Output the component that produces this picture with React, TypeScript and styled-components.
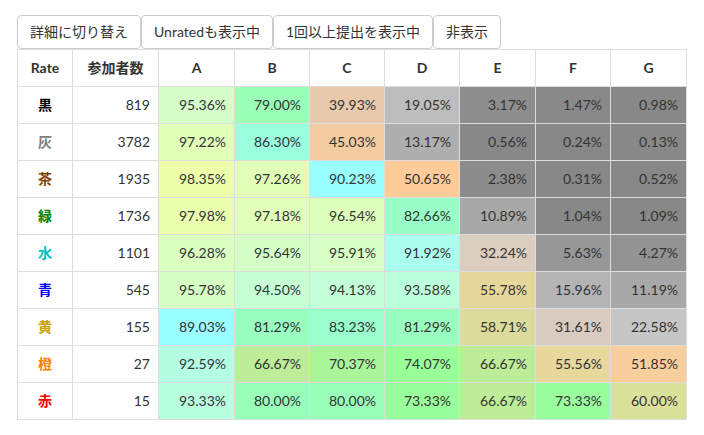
import React from "react";
import styled, { createGlobalStyle } from "styled-components";

const Global = createGlobalStyle`
  body {
    margin: 8px;
    font-family: Lato, "Noto Sans CJK JP", sans-serif;
    font-size: 14px;
    line-height: 20px;
    color: #333;
    background: #fff;
  }
`;

const Page = styled.div`
  padding: 7px 9px;
`;

const Toolbar = styled.div`
  display: flex;
  gap: 0;
`;

const Button = styled.button`
  font-family: Lato, "Noto Sans CJK JP", sans-serif;
  font-size: 14px;
  line-height: 20px;
  color: #333;
  background: #fff;
  border: 1px solid #ccc;
  border-radius: 4px;
  padding: 6px 12px;
  cursor: pointer;
`;

const Table = styled.table`
  border-collapse: collapse;
  table-layout: fixed;
  width: 669px;
`;

const Th = styled.th`
  border: 1px solid #ddd;
  padding: 8px;
  font-weight: bold;
  text-align: center;
  height: 20px;
`;

const RateCell = styled.td<{ $c: string }>`
  border: 1px solid #ddd;
  padding: 8px;
  text-align: center;
  font-weight: bold;
  color: ${(p) => p.$c};
`;

const Cell = styled.td<{ $bg?: string }>`
  border: 1px solid #ddd;
  padding: 8px;
  text-align: right;
  background: ${(p) => p.$bg ?? "#fff"};
`;

type Row = { rate: string; color: string; n: number; cells: [string, string][] };

const rows: Row[] = [
  { rate: "黒", color: "#000000", n: 819, cells: [
    ["95.36%", "#d4fdc8"], ["79.00%", "#9affb6"], ["39.93%", "#e8c9ab"], ["19.05%", "#bdbdbd"],
    ["3.17%", "#8e8e8e"], ["1.47%", "#898989"], ["0.98%", "#888888"]] },
  { rate: "灰", color: "#808080", n: 3782, cells: [
    ["97.22%", "#e2ffb8"], ["86.30%", "#99ffdd"], ["45.03%", "#f2cba0"], ["13.17%", "#aeaeae"],
    ["0.56%", "#888888"], ["0.24%", "#888888"], ["0.13%", "#888888"]] },
  { rate: "茶", color: "#804000", n: 1935, cells: [
    ["98.35%", "#eeffaa"], ["97.26%", "#e2ffb8"], ["90.23%", "#99ffff"], ["50.65%", "#ffcc99"],
    ["2.38%", "#8c8c8c"], ["0.31%", "#888888"], ["0.52%", "#888888"]] },
  { rate: "緑", color: "#008000", n: 1736, cells: [
    ["97.98%", "#eaffae"], ["97.18%", "#e0ffb8"], ["96.54%", "#dcffbc"], ["82.66%", "#99ffc8"],
    ["10.89%", "#a8a8a8"], ["1.04%", "#888888"], ["1.09%", "#888888"]] },
  { rate: "水", color: "#00c0c0", n: 1101, cells: [
    ["96.28%", "#daffc0"], ["95.64%", "#d4ffc6"], ["95.91%", "#d8ffc4"], ["91.92%", "#aaffee"],
    ["32.24%", "#dbcdc0"], ["5.63%", "#979797"], ["4.27%", "#939393"]] },
  { rate: "青", color: "#0000ff", n: 545, cells: [
    ["95.78%", "#d6ffc4"], ["94.50%", "#c6ffd4"], ["94.13%", "#c2ffd8"], ["93.58%", "#bcffdc"],
    ["55.78%", "#e6d89c"], ["15.96%", "#b4b4b4"], ["11.19%", "#a8a8a8"]] },
  { rate: "黄", color: "#c8a000", n: 155, cells: [
    ["89.03%", "#99ffff"], ["81.29%", "#99ffc0"], ["83.23%", "#99ffcc"], ["81.29%", "#99ffc0"],
    ["58.71%", "#dcdc9c"], ["31.61%", "#d9cbbf"], ["22.58%", "#c6c6c6"]] },
  { rate: "橙", color: "#ff8000", n: 27, cells: [
    ["92.59%", "#b4ffe4"], ["66.67%", "#bded99"], ["70.37%", "#aaf599"], ["74.07%", "#99ff99"],
    ["66.67%", "#bded99"], ["55.56%", "#e8d89c"], ["51.85%", "#f8cf9c"]] },
  { rate: "赤", color: "#ff0000", n: 15, cells: [
    ["93.33%", "#b8ffdd"], ["80.00%", "#99ffb8"], ["80.00%", "#99ffb8"], ["73.33%", "#99ff9c"],
    ["66.67%", "#bded99"], ["73.33%", "#99ff9c"], ["60.00%", "#d9e29b"]] },
];

const widths = [55, 86, 76, 75, 75, 75, 76, 75, 76];
const heads = ["Rate", "参加者数", "A", "B", "C", "D", "E", "F", "G"];

export default function App() {
  return (
    <Page>
      <Global />
      <Toolbar>
        <Button>詳細に切り替え</Button>
        <Button>Unratedも表示中</Button>
        <Button>1回以上提出を表示中</Button>
        <Button>非表示</Button>
      </Toolbar>
      <Table>
        <colgroup>
          {widths.map((w, i) => (
            <col key={i} style={{ width: w }} />
          ))}
        </colgroup>
        <thead>
          <tr>
            {heads.map((h) => (
              <Th key={h}>{h}</Th>
            ))}
          </tr>
        </thead>
        <tbody>
          {rows.map((r) => (
            <tr key={r.rate}>
              <RateCell $c={r.color}>{r.rate}</RateCell>
              <Cell>{r.n}</Cell>
              {r.cells.map(([t, bg], i) => (
                <Cell key={i} $bg={bg}>{t}</Cell>
              ))}
            </tr>
          ))}
        </tbody>
      </Table>
    </Page>
  );
}
